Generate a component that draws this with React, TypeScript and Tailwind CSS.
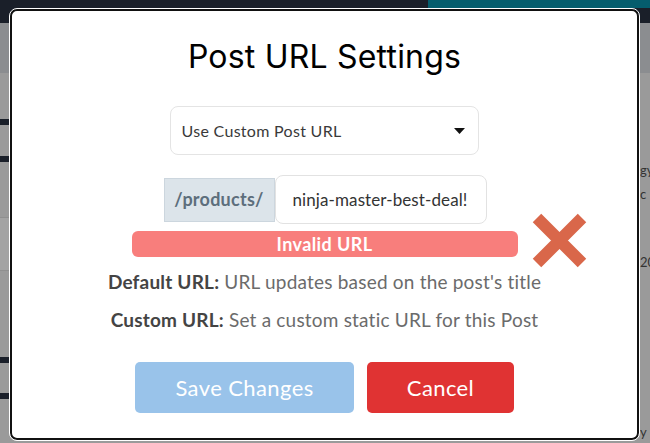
import React from "react";

export default function App() {
  const body = { fontFamily: "Lato, 'Noto Sans', sans-serif" };
  return (
    <div className="relative w-[650px] h-[443px] overflow-hidden bg-[#8e9093]" style={body}>
      {/* background page */}
      <div className="absolute inset-0 flex flex-col">
        <div className="h-[23px] bg-[#1a1f29] relative">
          <div className="absolute right-0 top-0 w-[222px] h-[8px] bg-[#055d6d]" />
        </div>
        <div className="h-[50px] bg-[#8b8d90]" />
        <div className="flex-1 bg-[#9a9a9a] relative">
          <div className="absolute left-0 top-[46px] w-[12px] h-[6px] bg-[#1a1f29]" />
          <div className="absolute left-0 top-[83px] w-[12px] h-[6px] bg-[#1a1f29]" />
          <div className="absolute left-0 top-[144px] w-[12px] h-[54px] bg-[#a3a3a3] border-y border-[#8f8f8f]" />
          <div className="absolute left-0 top-[284px] w-[12px] h-[6px] bg-[#1a1f29]" />
          <div className="absolute left-0 top-[320px] w-[12px] h-[6px] bg-[#1a1f29]" />
          <div className="absolute left-[640px] top-[88px] text-[13px] text-[#333]">gy</div>
          <div className="absolute left-[640px] top-[112px] text-[13px] text-[#333]">c</div>
          <div className="absolute left-[640px] top-[180px] text-[13px] text-[#333]">20</div>
          <div className="absolute left-[640px] top-[350px] text-[13px] text-[#333]">y</div>
        </div>
      </div>

      {/* modal */}
      <div className="absolute left-[10px] top-[9px] w-[629px] h-[431px] bg-white border-2 border-[#111] rounded-[7px] outline outline-1 outline-white flex flex-col items-center">
        <h1
          className="mt-[26px] text-[32px] leading-[40px] tracking-[0.2px] text-black"
          style={{ fontFamily: "Inter, sans-serif" }}
        >
          Post URL Settings
        </h1>

        <div className="mt-[29px] ml-[-1px] w-[309px] h-[49px] border border-[#e4e4e4] rounded-[8px] flex items-center justify-between pl-[11px] pr-[13px] text-[16px] tracking-[0.3px] text-[#3a3a3a]">
          <span>Use Custom Post URL</span>
          <svg width="11" height="6" viewBox="0 0 11 6"><path d="M0 0h11L5.5 6z" fill="#111" /></svg>
        </div>

        <div className="mt-[20px] flex items-center ml-[1px]">
          <div className="w-[111px] h-[44px] bg-[#dce4ea] border border-[#ccd6de] flex items-center justify-center text-[18px] tracking-[0.25px] font-bold text-[#5d6e7c]">
            /products/
          </div>
          <div className="w-[212px] h-[49px] border border-[#e2e2e2] rounded-[8px] bg-white flex items-center pl-[17px] text-[17px] tracking-[0.1px] text-[#333]">
            ninja-master-best-deal!
          </div>
        </div>

        <div className="relative mt-[7px] w-[386px] h-[26px] rounded-[6px] bg-[#f87e7c] flex items-center justify-center text-[18px] tracking-[0.4px] font-bold text-white">
          Invalid URL
          <svg className="absolute left-[399px] top-[-19px]" width="57" height="57" viewBox="0 0 57 57">
            <path d="M6 6L51 51M51 6L6 51" stroke="#d9674a" strokeWidth="12" />
          </svg>
        </div>

        <p className="mt-[13px] text-[19px] leading-[24px] tracking-[0.2px] text-[#6b6b6b]">
          <span className="font-bold text-[#444]">Default URL:</span> URL updates based on the post's title
        </p>
        <p className="mt-[14px] text-[19px] leading-[24px] tracking-[0.2px] text-[#6b6b6b]">
          <span className="font-bold text-[#444]">Custom URL:</span> Set a custom static URL for this Post
        </p>

        <div className="mt-[30px] flex gap-[13px]">
          <button className="w-[219px] h-[51px] rounded-[5px] bg-[#99c3ea] text-white text-[22px] tracking-[0.4px]">Save Changes</button>
          <button className="w-[147px] h-[51px] rounded-[5px] bg-[#e03333] text-white text-[22px] tracking-[0.4px]">Cancel</button>
        </div>
      </div>
    </div>
  );
}
